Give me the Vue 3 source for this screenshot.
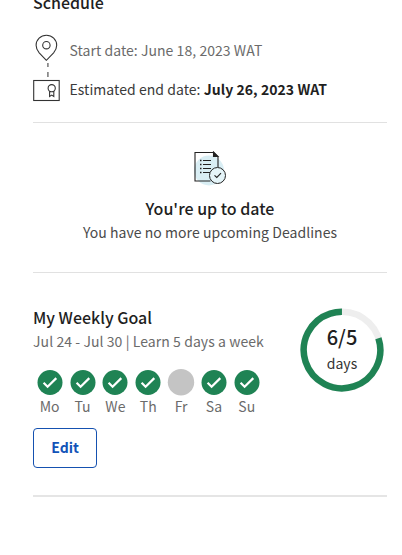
<script setup>
const days = [
  { label: 'Mo', done: true },
  { label: 'Tu', done: true },
  { label: 'We', done: true },
  { label: 'Th', done: true },
  { label: 'Fr', done: false },
  { label: 'Sa', done: true },
  { label: 'Su', done: true },
]
</script>

<template>
  <main class="panel">
    <section class="schedule">
      <h2 class="title heading">Schedule</h2>
      <div class="timeline">
        <svg class="track" width="28" height="68" viewBox="0 0 28 68" fill="none" stroke="#333" stroke-width="1.1">
          <path d="M13.400 26.300L6.200 18.800C4.200 16.500 3.100 14 3.100 11.200A10.300 10 0 0 1 23.700 11.200C23.700 14 22.600 16.500 20.600 18.800Z" />
          <circle cx="13.400" cy="11.200" r="3.700" />
          <path d="M14.900 29v4M14.900 38v5" stroke="#777" stroke-width="1.500" />
          <rect x="0.700" y="46.500" width="25.500" height="20" />
          <circle cx="18.700" cy="54.200" r="3.600" />
          <path d="M16.600 57.200v5.300l2.100-1.400 2.100 1.400v-5.300" />
        </svg>
        <div class="dates">
          <p class="start">Start date: June 18, 2023 WAT</p>
          <p class="end"><span class="endlabel">Estimated end date: </span><b>July 26, 2023 WAT</b></p>
        </div>
      </div>
    </section>

    <section class="status">
      <svg width="34" height="36" viewBox="0 0 34 36" fill="none" stroke="#222" stroke-width="1.100">
        <circle cx="16" cy="19.500" r="15" fill="#d9eef4" stroke="none" />
        <path d="M17.500 30H2V1.500H20.500L25 6V16" />
        <path d="M20.500 1v4.500H25Z" fill="#222" />
        <path d="M10 9.500h8M10 13.500h8M10 17.500h8M10 21.500h7" stroke-width="1.100" />
        <path d="M7 9.500h1.500M7 13.500h1.500M7 17.500h1.500M7 21.500h1.500" stroke-width="1.600" />
        <circle cx="24.500" cy="24.500" r="8" fill="#e4f4f8" stroke-width="1" />
        <path d="M21.500 24.300l2.300 2.200 4.200-4.400" />
      </svg>
      <h3 class="title uptodate">You're up to date</h3>
      <p class="none">You have no more upcoming Deadlines</p>
    </section>

    <section class="goal">
      <div class="info">
        <h3 class="title weekly">My Weekly Goal</h3>
        <p class="range">Jul 24 - Jul 30 | Learn 5 days a week</p>
        <ul class="days">
          <li v-for="day in days" :key="day.label">
            <svg width="28" height="28" viewBox="0 0 28 28">
              <template v-if="day.done">
                <circle cx="14" cy="14.500" r="12.500" fill="#1f8354" />
                <path d="M7.600 14.700l4 4L20.300 10.100" fill="none" stroke="#fff" stroke-width="2.200" />
              </template>
              <circle v-else cx="14" cy="14.200" r="13.200" fill="#c4c4c4" />
            </svg>
            <span>{{ day.label }}</span>
          </li>
        </ul>
        <button class="edit">Edit</button>
      </div>
      <div class="ring">
        <svg width="84" height="84" viewBox="0 0 84 84" fill="none" stroke-width="6.500">
          <circle cx="42" cy="42" r="38.300" stroke="#eee" />
          <circle cx="42" cy="42" r="38.300" stroke="#1f8354" pathLength="100" stroke-dasharray="80 100" transform="rotate(-18 42 42)" />
        </svg>
        <div class="count"><strong>6/5</strong><span>days</span></div>
      </div>
    </section>
  </main>
</template>

<style>
body { background: #fff; overflow: hidden; }
</style>

<style scoped>
.panel {
  box-sizing: border-box;
  width: 402px;
  height: 555px;
  padding: 0 15px 0 33px;
  overflow: hidden;
  font-family: "Noto Sans CJK SC", "Noto Sans", sans-serif;
  font-size: 14px;
  color: #1f1f1f;
}
h2, h3, p, ul { margin: 0; padding: 0; list-style: none; }
p { white-space: nowrap; letter-spacing: 0.050px; }
.title { font-weight: 500; white-space: nowrap; }
.schedule { box-sizing: border-box; height: 123px; border-bottom: 1px solid #e1e1e1; }
.heading { font-size: 16px; line-height: 24px; height: 34px; transform: translateY(-10px); }
.timeline { display: flex; gap: 8.500px; }
.track { flex: none; }
.dates { padding-top: 4px; }
.start { line-height: 24px; color: #6b6b6b; }
.end { line-height: 24px; margin-top: 15px; }
.endlabel { color: #3a3a3a; }
.status {
  box-sizing: border-box;
  height: 150px;
  padding-top: 28px;
  border-bottom: 1px solid #e1e1e1;
  display: flex;
  flex-direction: column;
  align-items: center;
}
.uptodate { font-size: 16px; line-height: 24px; margin-top: 9px; }
.none { line-height: 24px; color: #4a4a4a; }
.goal {
  box-sizing: border-box;
  height: 224px;
  border-bottom: 2px solid #e5e5e5;
  display: flex;
  justify-content: space-between;
}
.info { padding-top: 32px; }
.weekly { font-size: 16px; line-height: 24px; }
.range { line-height: 24px; color: #6b6b6b; letter-spacing: 0.070px; }
.days { display: flex; gap: 4.850px; padding: 15px 0 0 2.700px; }
.days li { width: 28px; display: flex; flex-direction: column; align-items: center; color: #6b6b6b; }
.days svg { display: block; }
.days span { line-height: 20px; }
.edit {
  display: block;
  width: 64px;
  height: 40px;
  margin-top: 12px;
  padding: 0 0 2px;
  border: 1px solid #1551b0;
  border-radius: 4px;
  background: #fff;
  color: #1253b8;
  font: 700 14px/36px "Noto Sans CJK SC", sans-serif;
}
.ring { display: grid; width: 84px; height: 84px; margin: 35px 3px 0 0; }
.ring > * { grid-area: 1 / 1; }
.count { display: flex; flex-direction: column; align-items: center; padding-top: 15px; }
.count strong { font-size: 20px; line-height: 28px; font-weight: 500; }
.count span { line-height: 24px; color: #333; }
</style>
